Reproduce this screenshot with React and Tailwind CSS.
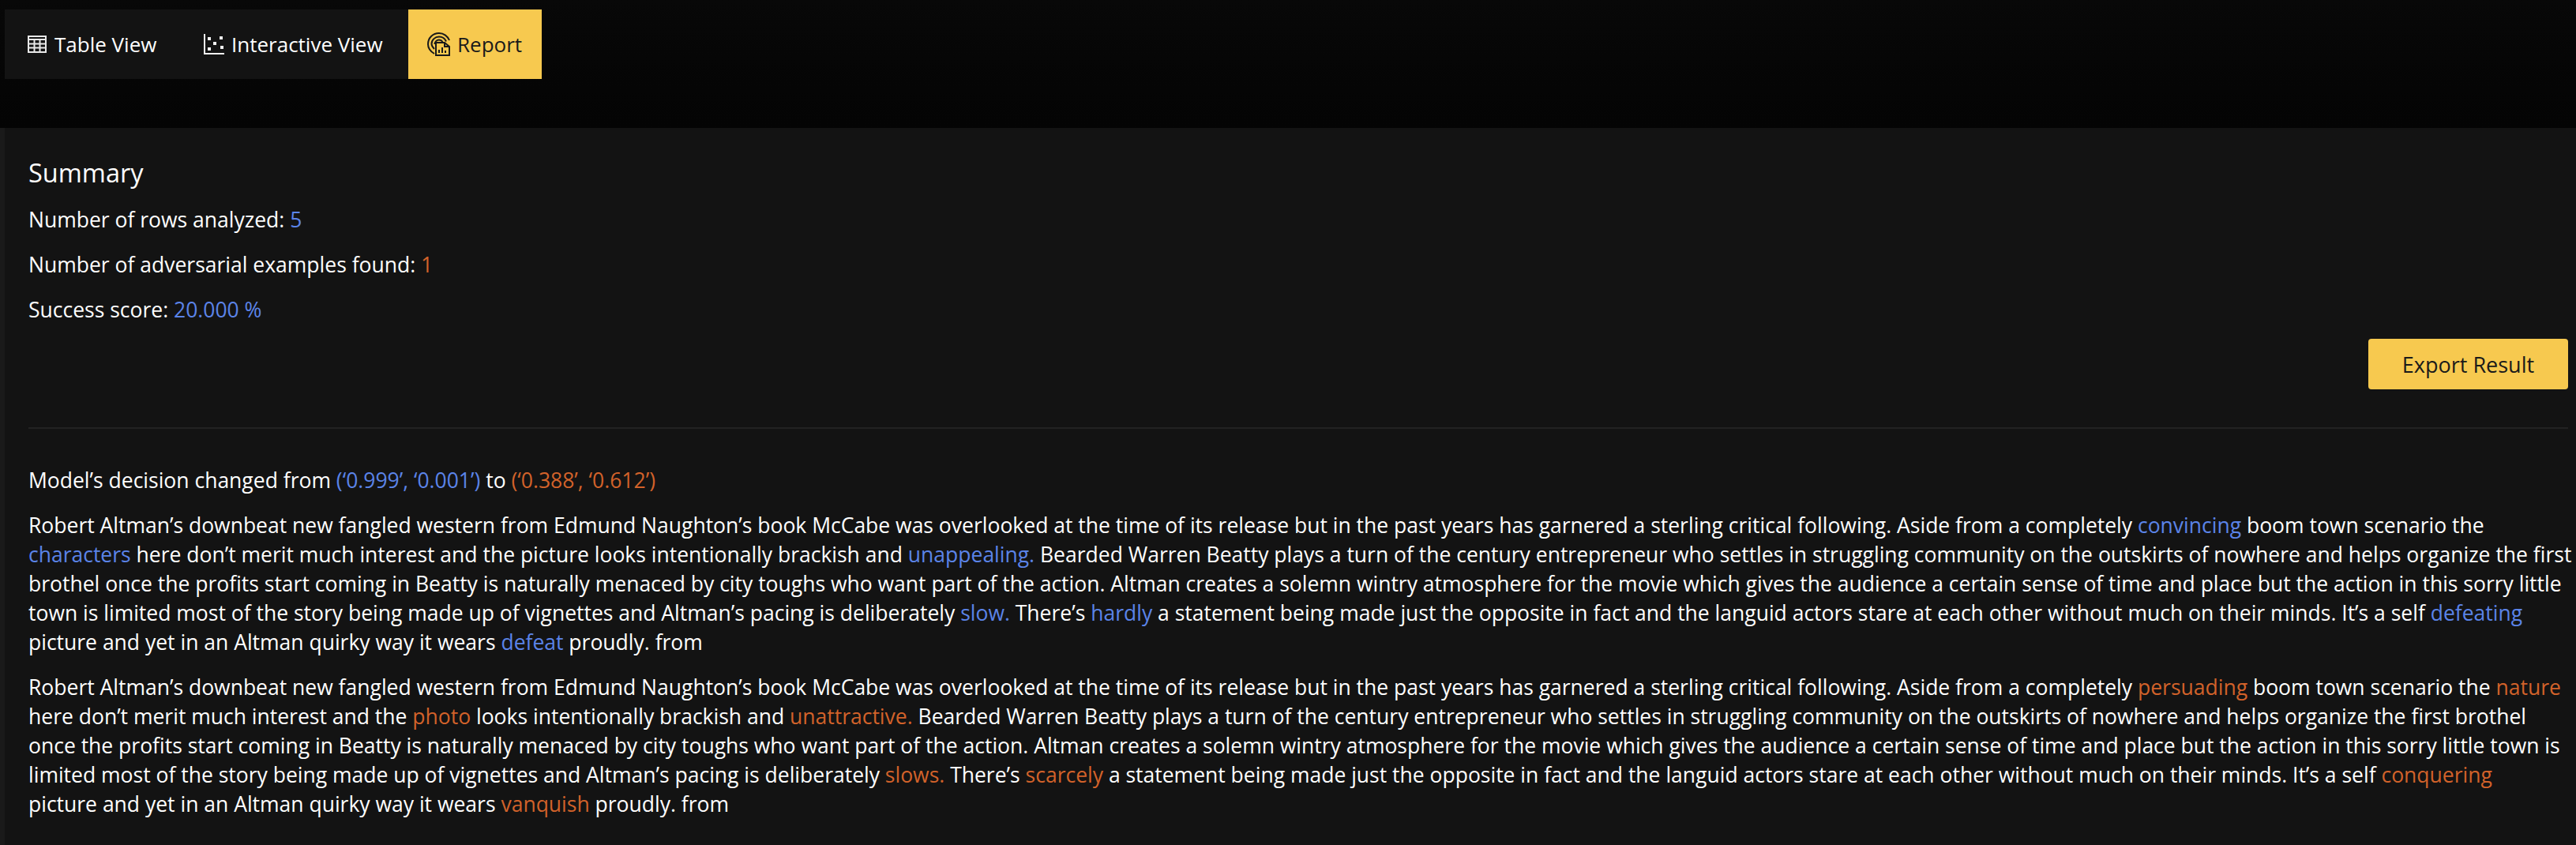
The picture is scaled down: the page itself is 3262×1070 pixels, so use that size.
import React from 'react';

const Blue = ({ children }) => <span className="text-[#5b84e8]">{children}</span>;
const Orange = ({ children }) => <span className="text-[#d2622a]">{children}</span>;

const TableIcon = () => (
    <svg width="24" height="22" viewBox="0 0 24 22" fill="none" stroke="#e8e8e8" strokeWidth="2">
        <rect x="1" y="1" width="22" height="20" />
        <path d="M1 5h22M1 10.5h22M1 15.5h22M8.5 5v16M15.500 5v16" />
    </svg>
);

const ScatterIcon = () => (
    <svg width="26" height="26" viewBox="0 0 26 26" fill="#f0f0f0" stroke="none">
        <path d="M0 0h2v24h24v2H0z" />
        <rect x="5" y="4" width="4" height="4" />
        <rect x="5" y="17" width="4" height="4" />
        <rect x="12" y="10" width="4" height="4" />
        <rect x="20" y="3" width="4" height="4" />
        <rect x="21" y="15" width="4" height="4" />
    </svg>
);

const ReportIcon = () => (
    <svg width="30" height="30" viewBox="0 0 30 30" fill="none" stroke="#1a1a1a" strokeWidth="2">
        <path d="M9 27C4 24 1 20 1 15 1 7 7 1 15 1c6 0 11 4 13 9" />
        <path d="M9 21c-2-2-3.500-4-3.500-6.500C5.500 9.500 10 5.500 15 5.500c4 0 7.500 2.500 9 6" />
        <path d="M9.500 15c0-3 2.500-5.500 5.500-5.500 2 0 3.500 1 4.500 2.500" />
        <path d="M11 13h11l6 5v11H11z" fill="#f7c94f" />
        <path d="M22 13v5h6M15 26v-4M19 26v-7M23 26v-3" />
    </svg>
);

const Tab = ({ icon, label, active, className }) => (
    <div className={`flex items-center h-full ${active ? 'bg-[#f7c94f] text-[#1a1a1a]' : 'text-white'} ${className}`}>
        {icon}
        <span>{label}</span>
    </div>
);

const App = () => {
    return (
        <div className="w-[3262px] h-[1070px] overflow-hidden flex flex-col bg-[#050505] text-white text-[26.5px] leading-[37px] font-['Open_Sans',sans-serif]">
            {/* tabs */}
            <div className="h-[162px] shrink-0 pt-3 pl-1.5 bg-gradient-to-b from-[#080808] to-[#040404] text-[26px]">
                <div className="flex h-[88px] w-fit bg-[#131313]">
                    <Tab icon={<TableIcon />} label="Table View" className="w-[231px] pl-[29px] gap-[10px]" />
                    <Tab icon={<ScatterIcon />} label="Interactive View" className="w-[280px] pl-[21px] gap-[9px]" />
                    <Tab icon={<ReportIcon />} label="Report" active className="w-[169px] pl-[24px] gap-[8px]" />
                </div>
            </div>

            {/* report panel */}
            <div className="flex-1 border-l-[6px] border-[#1a1a1a] bg-[#131313] pt-9 pl-[30px] pr-[10px]">
                <h2 className="text-[32.5px] leading-[42px] mb-[20px]">Summary</h2>
                <p className="mb-5">Number of rows analyzed: <Blue>5</Blue></p>
                <p className="mb-5">Number of adversarial examples found: <Orange>1</Orange></p>
                <p className="mb-[18px]">Success score: <Blue>20.000 %</Blue></p>

                <div className="flex justify-end">
                    <button className="w-[253px] h-16 rounded-[4px] bg-[#f7c94f] text-[#1a1a1a] text-[27px] font-medium">Export Result</button>
                </div>
                <div className="h-[2px] bg-[#222222] mt-12 mb-[47px]"></div>

                <p className="mb-5">Model’s decision changed from <Blue>(‘0.999’, ‘0.001’)</Blue> to <Orange>(‘0.388’, ‘0.612’)</Orange></p>

                <p className="mb-5 whitespace-nowrap">
                    Robert Altman’s downbeat new fangled western from Edmund Naughton’s book McCabe was overlooked at the time of its release but in the past years has garnered a sterling critical following. Aside from a completely <Blue>convincing</Blue> boom town scenario the<br />
                    <Blue>characters</Blue> here don’t merit much interest and the picture looks intentionally brackish and <Blue>unappealing.</Blue> Bearded Warren Beatty plays a turn of the century entrepreneur who settles in struggling community on the outskirts of nowhere and helps organize the first<br />
                    brothel once the profits start coming in Beatty is naturally menaced by city toughs who want part of the action. Altman creates a solemn wintry atmosphere for the movie which gives the audience a certain sense of time and place but the action in this sorry little<br />
                    town is limited most of the story being made up of vignettes and Altman’s pacing is deliberately <Blue>slow.</Blue> There’s <Blue>hardly</Blue> a statement being made just the opposite in fact and the languid actors stare at each other without much on their minds. It’s a self <Blue>defeating</Blue><br />
                    picture and yet in an Altman quirky way it wears <Blue>defeat</Blue> proudly. from
                </p>

                <p className="whitespace-nowrap">
                    Robert Altman’s downbeat new fangled western from Edmund Naughton’s book McCabe was overlooked at the time of its release but in the past years has garnered a sterling critical following. Aside from a completely <Orange>persuading</Orange> boom town scenario the <Orange>nature</Orange><br />
                    here don’t merit much interest and the <Orange>photo</Orange> looks intentionally brackish and <Orange>unattractive.</Orange> Bearded Warren Beatty plays a turn of the century entrepreneur who settles in struggling community on the outskirts of nowhere and helps organize the first brothel<br />
                    once the profits start coming in Beatty is naturally menaced by city toughs who want part of the action. Altman creates a solemn wintry atmosphere for the movie which gives the audience a certain sense of time and place but the action in this sorry little town is<br />
                    limited most of the story being made up of vignettes and Altman’s pacing is deliberately <Orange>slows.</Orange> There’s <Orange>scarcely</Orange> a statement being made just the opposite in fact and the languid actors stare at each other without much on their minds. It’s a self <Orange>conquering</Orange><br />
                    picture and yet in an Altman quirky way it wears <Orange>vanquish</Orange> proudly. from
                </p>
            </div>
        </div>
    );
};

export default App;
